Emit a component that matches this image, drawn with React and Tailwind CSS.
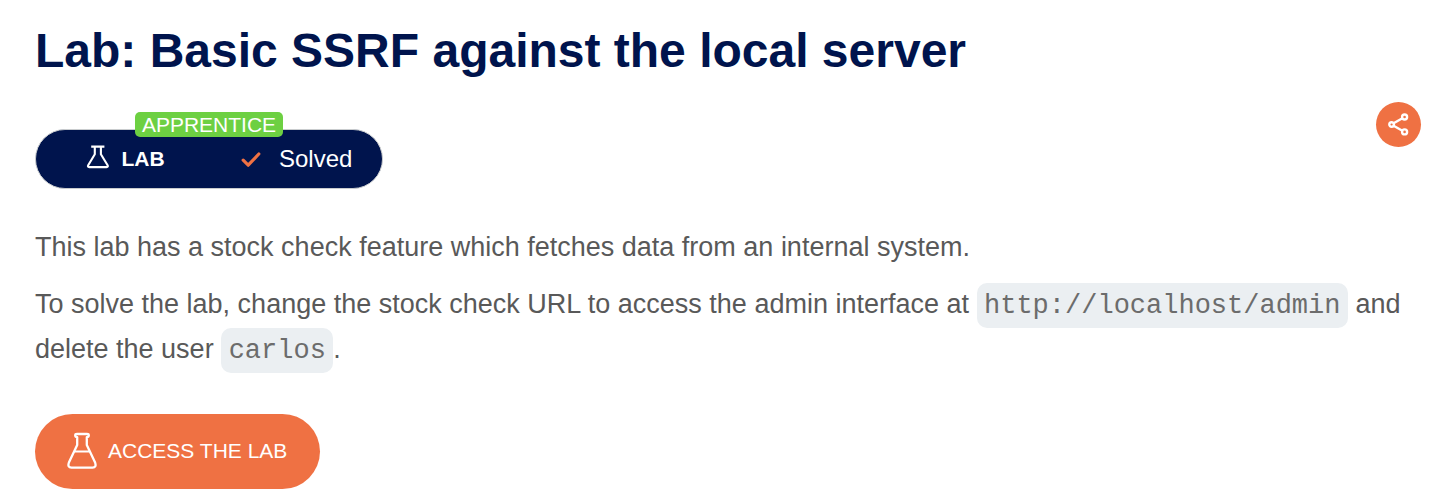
function SmallFlask() {
  return (
    <svg className="mb-[5px] h-6 w-6 shrink-0" viewBox="0 0 24 24" fill="none" stroke="white" strokeWidth="2.1" strokeLinejoin="round">
      <path d="M5.200 1.600h13.200M8.800 1.600v7.600L2.200 20.200q-.9 1.900 1 1.900h17.400q1.900 0 1-1.900L14.900 9.200V1.600" />
    </svg>
  );
}

function LargeFlask() {
  return (
    <svg className="mb-[2px] h-[38px] w-[30px] shrink-0" viewBox="0 0 30 38" fill="none" stroke="white" strokeWidth="2.300" strokeLinejoin="round" strokeLinecap="round">
      <path d="M10.200 5.200q-2-.1-2-1.900 0-1.300 1.800-1.300h10q1.800 0 1.800 1.300 0 1.800-2 1.900v7.800l8.300 17.500q1.700 5-2.600 5.200h-21Q.2 35.500 1.900 30.500L10.200 13Z" />
      <path d="M8 19.500h14" strokeWidth="2" />
    </svg>
  );
}

function Code({ children }) {
  return (
    <code className="rounded-[10px] bg-[#ebeff2] px-[7.5px] pb-[7px] pt-[8px] font-['Liberation_Mono',monospace] text-[27px] leading-none text-[#6c6c6c]">
      {children}
    </code>
  );
}

export default function App() {
  return (
    <main className="h-[502px] w-[1453px] overflow-hidden bg-white pl-[35px] pt-[21px] font-['Liberation_Sans',Arial,sans-serif] text-[#595959]">
      <h1 className="h-[81px] text-[48px] font-bold leading-[60px] text-[#00144d]">
        Lab: Basic SSRF against the local server
      </h1>
      <div className="flex h-[123px] items-start justify-between pr-8">
        <div className="relative mt-[27px] flex h-[60px] w-[348px] items-center rounded-full border border-[#c9ccce] bg-[#00144d] pl-[50px] text-white">
          <span className="absolute left-[99px] top-[-18px] flex h-[25px] w-[148px] items-center justify-center rounded-[5px] bg-[#6dd042] text-[21px] leading-[25px]">
            APPRENTICE
          </span>
          <SmallFlask />
          <span className="ml-[11.5px] w-[119.5px] text-[21px] font-bold">LAB</span>
          <svg className="h-5 w-5 shrink-0" viewBox="0 0 20 20" fill="none" stroke="#ef7143" strokeWidth="3.200" strokeLinecap="round" strokeLinejoin="round">
            <path d="M2.200 11.200l5 5L17.800 5" />
          </svg>
          <span className="ml-[18px] text-[24px]">Solved</span>
        </div>
        <button className="flex h-[45px] w-[45px] items-center justify-center rounded-full bg-[#ef7143]" aria-label="Share">
          <svg className="h-6 w-6" viewBox="0 0 24 24" fill="none" stroke="white" strokeWidth="2.400">
            <circle cx="4.600" cy="11.500" r="2.300" />
            <circle cx="17.600" cy="4" r="2.500" />
            <circle cx="17.600" cy="18.900" r="2.500" />
            <path d="M6.600 10.300L15.400 5.300M6.600 12.700l8.800 5" />
          </svg>
        </button>
      </div>
      <p className="text-[27px] leading-[45px]">
        This lab has a stock check feature which fetches data from an internal system.
      </p>
      <p className="mt-3 h-[90px] text-[27px] leading-[45px]">
        To solve the lab, change the stock check URL to access the admin interface at <Code>http://localhost/admin</Code> and
        <br />
        delete the user <Code>carlos</Code>.
      </p>
      <button className="mt-[42px] flex h-[75px] w-[285px] items-center rounded-full bg-[#ef7143] pl-8 text-[21px] text-white">
        <LargeFlask />
        <span className="mb-[2px] ml-[11px] whitespace-nowrap">ACCESS THE LAB</span>
      </button>
    </main>
  );
}
